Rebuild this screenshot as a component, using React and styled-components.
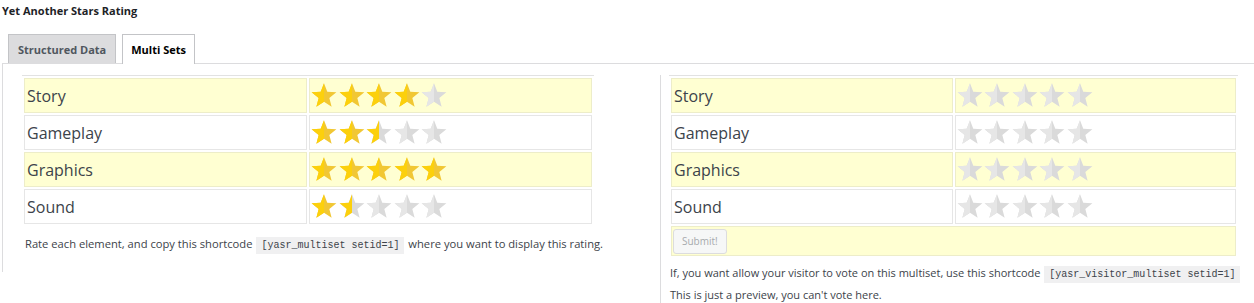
import styled, { createGlobalStyle } from 'styled-components'

const GlobalStyle = createGlobalStyle`
  body {
    margin: 0;
    background: #fff;
    font-family: "Open Sans", "Noto Sans", sans-serif;
    color: #3c434a;
  }
`

const ROWS = [
  { name: 'Story', value: 4 },
  { name: 'Gameplay', value: 2.5 },
  { name: 'Graphics', value: 5 },
  { name: 'Sound', value: 1.5 },
]

const GOLD_L = '#fcd00c'
const GOLD_R = '#f1c734'
const GREY_L = '#e6e6e6'
const GREY_R = '#dadada'

const starPoints = (() => {
  const pts = []
  for (let i = 0; i < 10; i++) {
    const a = -Math.PI / 2 + (i * Math.PI) / 5
    const r = i % 2 === 0 ? 13 : 5.6
    pts.push(`${(13 + r * Math.cos(a)).toFixed(2)},${(13.2 + r * Math.sin(a)).toFixed(2)}`)
  }
  return pts.join(' ')
})()

const Star = ({ left, right }) => (
  <StarSvg width="26" height="25" viewBox="0 0 26 25">
    <polygon points={starPoints} fill={right} />
    <svg x="0" y="0" width="13" height="25">
      <polygon points={starPoints} fill={left} />
    </svg>
  </StarSvg>
)

const Stars = ({ value }) => (
  <StarRow>
    {[0, 1, 2, 3, 4].map((i) => {
      if (value >= i + 1) return <Star key={i} left={GOLD_L} right={GOLD_R} />
      if (value >= i + 0.5) return <Star key={i} left={GOLD_L} right={GREY_R} />
      return <Star key={i} left={GREY_L} right={GREY_R} />
    })}
  </StarRow>
)

const App = () => {
  return (
    <Page>
      <GlobalStyle />
      <Title>Yet Another Stars Rating</Title>

      <Tabs>
        <Tab>Structured Data</Tab>
        <Tab $active>Multi Sets</Tab>
      </Tabs>

      <Panel>
        <LeftCol>
          <RatingTable>
            <tbody>
              {ROWS.map((row, i) => (
                <tr key={row.name}>
                  <Label $odd={i % 2 === 0}>{row.name}</Label>
                  <StarCell $odd={i % 2 === 0}>
                    <Stars value={row.value} />
                  </StarCell>
                </tr>
              ))}
            </tbody>
          </RatingTable>
          <Note $left>
            Rate each element, and copy this shortcode <Code>[yasr_multiset setid=1]</Code> where you want to display this rating.
          </Note>
        </LeftCol>

        <RightCol>
          <RatingTable>
            <tbody>
              {ROWS.map((row, i) => (
                <tr key={row.name}>
                  <Label $odd={i % 2 === 0}>{row.name}</Label>
                  <StarCell $odd={i % 2 === 0}>
                    <Stars value={0} />
                  </StarCell>
                </tr>
              ))}
              <tr>
                <SubmitCell colSpan={2}>
                  <SubmitButton disabled>Submit!</SubmitButton>
                </SubmitCell>
              </tr>
            </tbody>
          </RatingTable>
          <Note>
            If, you want allow your visitor to vote on this multiset, use this shortcode <Code>[yasr_visitor_multiset setid=1]</Code>
            <br />
            This is just a preview, you can't vote here.
          </Note>
        </RightCol>
      </Panel>
    </Page>
  )
}

export default App

const Page = styled.div`
  width: 1254px;
  height: 303px;
  overflow: hidden;
  padding-left: 2px;
  box-sizing: border-box;
`

const Title = styled.h1`
  margin: 0;
  padding-top: 3px;
  height: 34px;
  box-sizing: border-box;
  font-size: 11px;
  font-weight: 700;
  color: #1d2327;
  line-height: 15px;
`

const Tabs = styled.div`
  display: flex;
  gap: 6px;
  padding-left: 6px;
  height: 29px;
  align-items: flex-start;
`

const Tab = styled.div`
  box-sizing: border-box;
  padding: 0 ${(p) => (p.$active ? '8px' : '9px')};
  display: flex;
  align-items: center;
  font-size: 11px;
  font-weight: 700;
  border: 1px solid #c3c4c7;
  border-bottom: none;
  background: ${(p) => (p.$active ? '#fff' : '#dcdcde')};
  color: ${(p) => (p.$active ? '#000' : '#50575e')};
  height: ${(p) => (p.$active ? '30px' : '29px')};
  position: relative;
  z-index: 1;
`

const Panel = styled.div`
  display: flex;
  align-items: flex-start;
  border-top: 1px solid #dcdcde;
`

const LeftCol = styled.div`
  width: 658px;
  flex-shrink: 0;
  box-sizing: border-box;
  border-left: 1px solid #dcdcde;
  padding: 11px 0 16px 19px;
`

const RightCol = styled.div`
  flex: 1;
  min-width: 0;
  margin-top: 11px;
  height: 240px;
  border-left: 1px solid #dcdcde;
  padding-left: 8px;
  padding-right: 16px;
`

const RatingTable = styled.table`
  width: 100%;
  max-width: 572px;
  border-collapse: separate;
  border-spacing: 2px;
  border-top: 1px solid #e2e2e2;
  table-layout: fixed;
`

const Label = styled.td`
  height: 35px;
  box-sizing: border-box;
  padding: 0 2px;
  font-size: 16px;
  color: #3c434a;
  vertical-align: middle;
  background: ${(p) => (p.$odd ? '#ffffd2' : '#fff')};
  border: 1px solid ${(p) => (p.$odd ? '#ededc9' : '#e6e6e6')};
`

const StarCell = styled(Label)`
  padding: 0 1px;
`

const StarRow = styled.div`
  display: flex;
  gap: 1.5px;
`

const StarSvg = styled.svg`
  display: block;
  flex-shrink: 0;
`

const SubmitCell = styled.td`
  height: 29px;
  box-sizing: border-box;
  padding: 1px;
  background: #ffffd2;
  border: 1px solid #ededc9;
`

const SubmitButton = styled.button`
  height: 25px;
  padding: 0 8px;
  font-family: "Open Sans", "Noto Sans", sans-serif;
  font-size: 10px;
  color: #a7aaad;
  background: #f6f7f7;
  border: 1px solid #dcdcde;
  border-radius: 3px;
`

const Note = styled.p`
  margin: ${(p) => (p.$left ? '8px 0 0 3px' : '5px 0 0 1px')};
  font-size: ${(p) => (p.$left ? '11.2px' : '11px')};
  line-height: 20px;
  color: #3c434a;
  white-space: nowrap;
`

const Code = styled.code`
  font-family: "Liberation Mono", monospace;
  font-size: 10px;
  background: #f0f0f1;
  padding: 3px 5px;
  margin: 0 1px;
`
